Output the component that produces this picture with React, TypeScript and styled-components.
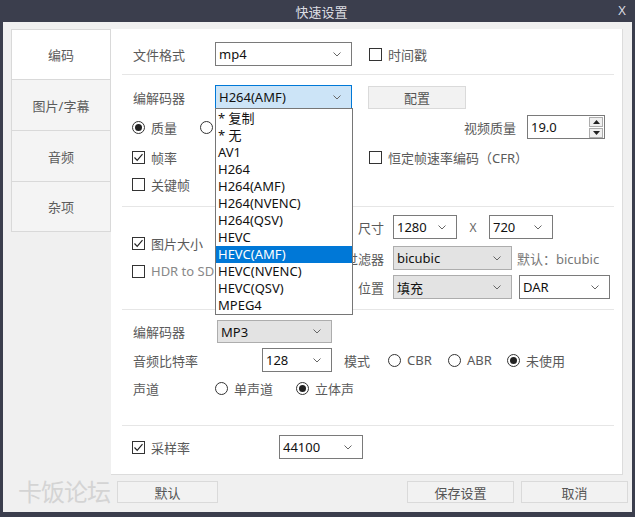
import React from "react"
import styled, { createGlobalStyle } from "styled-components"

const GlobalStyle = createGlobalStyle`
  html, body { margin: 0; padding: 0; background: #3b3e4d; }
  body { font-family: "Noto Sans", "Noto Sans CJK SC", sans-serif; font-size: 13px; }
  * { box-sizing: border-box; }
`

const codecs = [
  "* 复制", "* 无", "AV1", "H264", "H264(AMF)", "H264(NVENC)", "H264(QSV)",
  "HEVC", "HEVC(AMF)", "HEVC(NVENC)", "HEVC(QSV)", "MPEG4",
]

const Chevron = () => (
  <svg width="8" height="5" viewBox="0 0 8 5">
    <polyline points="0.5,0.5 4,4 7.5,0.5" fill="none" stroke="#666" strokeWidth="1" />
  </svg>
)

const CheckMark = () => (
  <svg width="11" height="11" viewBox="0 0 11 11">
    <polyline points="1.5,5.5 4.2,8.3 9.5,2.2" fill="none" stroke="#222" strokeWidth="1.2" />
  </svg>
)

const Combo = ({ value, w, gray, active, children }: { value: string; w: number; gray?: boolean; active?: boolean; children?: React.ReactNode }) => (
  <Select $w={w} $gray={gray} $active={active}>
    <SelValue>{value}</SelValue>
    <Chevron />
    {children}
  </Select>
)

const Check = ({ on, label, dim }: { on?: boolean; label: string; dim?: boolean }) => (
  <Opt>
    <Box>{on && <CheckMark />}</Box>
    <OptText $dim={dim}>{label}</OptText>
  </Opt>
)

const Radio = ({ on, label }: { on?: boolean; label?: string }) => (
  <Opt>
    <Circle>{on && <Dot />}</Circle>
    {label && <OptText>{label}</OptText>}
  </Opt>
)

const App = () => {
  return (
    <Window>
      <GlobalStyle />
      <TitleBar>
        <span />
        <Title>快速设置</Title>
        <Close>X</Close>
      </TitleBar>
      <Client>
        <Body>
          <Tabs>
            <Tab $on>编码</Tab>
            <Tab>图片/字幕</Tab>
            <Tab>音频</Tab>
            <Tab>杂项</Tab>
          </Tabs>
          <Panel>
            <Section $pt={13} $pb={8}>
              <Row>
                <Label $w={83}>文件格式</Label>
                <Combo value="mp4" w={137} />
                <Gap $w={17} />
                <Check label="时间戳" />
              </Row>
            </Section>
            <Divider />
            <Section $pt={10} $pb={10}>
              <Row>
                <Label $w={83}>编解码器</Label>
                <Combo value="H264(AMF)" w={137} active>
                  <List>
                    {codecs.map((c) => (
                      <Item key={c} $on={c === "HEVC(AMF)"}>{c}</Item>
                    ))}
                  </List>
                </Combo>
                <Gap $w={16} />
                <Button $w={98} $h={23}>配置</Button>
              </Row>
              <Row $mt={6}>
                <Cell $w={68}><Radio on label="质量" /></Cell>
                <Radio />
                <Spacer />
                <Label>视频质量</Label>
                <Gap $w={11} />
                <Spin>
                  <SelValue>19.0</SelValue>
                  <SpinBtns>
                    <SpinBtn>
                      <svg width="7" height="4" viewBox="0 0 7 4"><polygon points="0,4 3.5,0 7,4" fill="#222" /></svg>
                    </SpinBtn>
                    <SpinBtn>
                      <svg width="7" height="4" viewBox="0 0 7 4"><polygon points="0,0 3.5,4 7,0" fill="#222" /></svg>
                    </SpinBtn>
                  </SpinBtns>
                </Spin>
                <Gap $w={17} />
              </Row>
              <Row $mt={6}>
                <Cell $w={237}><Check on label="帧率" /></Cell>
                <Check label="恒定帧速率编码（CFR）" />
              </Row>
              <Row $mt={3}>
                <Check label="关键帧" />
              </Row>
            </Section>
            <Divider />
            <Section $pt={0} $pb={10}>
              <Split>
                <LeftCol>
                  <Row $mt={24}><Check on label="图片大小" /></Row>
                  <Row $mt={4}><Check label="HDR to SDR" dim /></Row>
                </LeftCol>
                <RightCol>
                  <Row $mt={8}>
                    <RLabel>尺寸</RLabel>
                    <Combo value="1280" w={64} />
                    <Times>X</Times>
                    <Combo value="720" w={64} />
                  </Row>
                  <Row $mt={7}>
                    <RLabel>过滤器</RLabel>
                    <Combo value="bicubic" w={119} gray />
                    <Gap $w={5} />
                    <Hint>默认：bicubic</Hint>
                  </Row>
                  <Row $mt={5}>
                    <RLabel>位置</RLabel>
                    <Combo value="填充" w={119} gray />
                    <Gap $w={7} />
                    <Combo value="DAR" w={91} />
                  </Row>
                </RightCol>
              </Split>
            </Section>
            <Divider />
            <Section $pt={10} $pb={25}>
              <Row $h={23}>
                <Label $w={85}>编解码器</Label>
                <Combo value="MP3" w={115} gray />
              </Row>
              <Row $mt={5}>
                <Label $w={130}>音频比特率</Label>
                <Combo value="128" w={70} />
                <Gap $w={11} />
                <Label $w={45}>模式</Label>
                <Cell $w={60}><Radio label="CBR" /></Cell>
                <Cell $w={59}><Radio label="ABR" /></Cell>
                <Radio on label="未使用" />
              </Row>
              <Row $mt={4}>
                <Label $w={83}>声道</Label>
                <Cell $w={81}><Radio label="单声道" /></Cell>
                <Radio on label="立体声" />
              </Row>
            </Section>
            <Divider />
            <Section $pt={9} $pb={0}>
              <Row>
                <Cell $w={147}><Check on label="采样率" /></Cell>
                <Combo value="44100" w={84} />
              </Row>
            </Section>
          </Panel>
        </Body>
        <Footer>
          <Watermark>卡饭论坛</Watermark>
          <Button $w={101} $h={22}>默认</Button>
          <Spacer />
          <Button $w={107} $h={22}>保存设置</Button>
          <Gap $w={7} />
          <Button $w={107} $h={22}>取消</Button>
          <Gap $w={4} />
        </Footer>
      </Client>
    </Window>
  )
}

export default App

const Window = styled.div`
  width: 635px;
  height: 517px;
  background: #3b3e4d;
  display: flex;
  flex-direction: column;
  overflow: hidden;
`
const TitleBar = styled.div`
  height: 22px;
  display: grid;
  grid-template-columns: 1fr auto 1fr;
  align-items: center;
  color: #dcdde2;
`
const Title = styled.span`
  font-size: 13px;
  padding-left: 8px;
`
const Close = styled.span`
  justify-self: end;
  margin-right: 9px;
  font-family: "Liberation Sans", sans-serif;
  font-size: 12px;
`
const Client = styled.div`
  flex: 1;
  margin: 0 3px 5px 3px;
  background: #f0f0f0;
  display: flex;
  flex-direction: column;
  padding-top: 7px;
`
const Body = styled.div`
  display: flex;
  height: 446px;
  margin-left: 8px;
`
const Tabs = styled.div`
  width: 100px;
  height: 203px;
  display: flex;
  flex-direction: column;
  border: 1px solid #d9d9d9;
  border-right: none;
  border-bottom: none;
`
const Tab = styled.div<{ $on?: boolean }>`
  height: 51px;
  display: flex;
  align-items: center;
  justify-content: center;
  background: ${(p) => (p.$on ? "#fff" : "#f4f4f4")};
  border-bottom: 1px solid #d9d9d9;
  border-right: 1px solid #d9d9d9;
  color: #5c5c5c;
  font-size: 13px;
  &:first-child { height: 50px; }
  &:last-child { height: 50px; }
`
const Panel = styled.div`
  width: 512px;
  background: #fff;
  border-right: 1px solid #dcdcdc;
  border-bottom: 1px solid #dcdcdc;
  display: flex;
  flex-direction: column;
`
const Section = styled.div<{ $pt: number; $pb: number }>`
  display: flex;
  flex-direction: column;
  padding: ${(p) => p.$pt}px 0 ${(p) => p.$pb}px 21px;
`
const Divider = styled.div`
  height: 1px;
  background: #e6e6e6;
  margin: 0 8px 0 11px;
`
const Row = styled.div<{ $h?: number; $mt?: number }>`
  display: flex;
  align-items: center;
  height: ${(p) => p.$h ?? 24}px;
  margin-top: ${(p) => p.$mt ?? 0}px;
`
const Split = styled.div`
  display: flex;
`
const LeftCol = styled.div`
  width: 208px;
  display: flex;
  flex-direction: column;
`
const RightCol = styled.div`
  display: flex;
  flex-direction: column;
`
const Label = styled.span<{ $w?: number }>`
  width: ${(p) => (p.$w ? `${p.$w}px` : "auto")};
  flex-shrink: 0;
  padding-left: 1px;
  color: #5a5a5a;
  white-space: nowrap;
`
const RLabel = styled.span`
  width: 44px;
  margin-right: 9px;
  text-align: right;
  color: #5a5a5a;
  white-space: nowrap;
`
const Hint = styled.span`
  color: #777;
  white-space: nowrap;
`
const Times = styled.span`
  width: 32px;
  text-align: center;
  color: #666;
  font-size: 12px;
`
const Cell = styled.div<{ $w: number }>`
  width: ${(p) => p.$w}px;
  flex-shrink: 0;
  display: flex;
  align-items: center;
`
const Gap = styled.span<{ $w: number }>`
  width: ${(p) => p.$w}px;
  flex-shrink: 0;
`
const Spacer = styled.span`
  flex: 1;
`
const Select = styled.div<{ $w: number; $gray?: boolean; $active?: boolean }>`
  position: relative;
  width: ${(p) => p.$w}px;
  height: 100%;
  flex-shrink: 0;
  display: flex;
  align-items: center;
  justify-content: space-between;
  padding: 0 10px 0 3px;
  border: 1px solid ${(p) => (p.$active ? "#0078d7" : p.$gray ? "#adadad" : "#7a7a7a")};
  background: ${(p) => (p.$active ? "#cce4f7" : p.$gray ? "#e3e3e3" : "#fff")};
  color: #111;
`
const SelValue = styled.span`
  white-space: nowrap;
`
const List = styled.div`
  position: absolute;
  top: 100%;
  left: -1px;
  width: 138px;
  padding-top: 1px;
  background: #fff;
  border: 1px solid #767676;
  z-index: 5;
`
const Item = styled.div<{ $on?: boolean }>`
  height: 17px;
  line-height: 17px;
  padding-left: 2px;
  white-space: nowrap;
  background: ${(p) => (p.$on ? "#0078d7" : "transparent")};
  color: ${(p) => (p.$on ? "#fff" : "#111")};
`
const Button = styled.div<{ $w: number; $h: number }>`
  width: ${(p) => p.$w}px;
  height: ${(p) => p.$h}px;
  flex-shrink: 0;
  display: flex;
  align-items: center;
  justify-content: center;
  background: #f2f2f2;
  border: 1px solid #dadada;
  color: #555;
`
const Spin = styled.div`
  width: 78px;
  height: 24px;
  flex-shrink: 0;
  display: flex;
  align-items: center;
  justify-content: space-between;
  padding: 0 1px 0 3px;
  border: 1px solid #7a7a7a;
  color: #111;
`
const SpinBtns = styled.div`
  display: flex;
  flex-direction: column;
  gap: 1px;
`
const SpinBtn = styled.div`
  width: 14px;
  height: 10px;
  display: flex;
  align-items: center;
  justify-content: center;
  background: #f0f0f0;
  border: 1px solid #adadad;
`
const Opt = styled.div`
  display: flex;
  align-items: center;
  white-space: nowrap;
`
const Box = styled.span`
  width: 13px;
  height: 13px;
  border: 1px solid #333;
  background: #fff;
  display: flex;
  align-items: center;
  justify-content: center;
  margin-right: 6px;
`
const Circle = styled.span`
  width: 13px;
  height: 13px;
  border: 1px solid #333;
  border-radius: 50%;
  display: flex;
  align-items: center;
  justify-content: center;
  margin-right: 6px;
`
const Dot = styled.span`
  width: 7px;
  height: 7px;
  border-radius: 50%;
  background: #222;
`
const OptText = styled.span<{ $dim?: boolean }>`
  color: ${(p) => (p.$dim ? "#888" : "#5a5a5a")};
`
const Footer = styled.div`
  flex: 1;
  display: flex;
  align-items: flex-start;
  padding: 6px 0 0 15px;
`
const Watermark = styled.span`
  width: 99px;
  font-size: 24px;
  line-height: 22px;
  color: #d4d4d4;
  white-space: nowrap;
  letter-spacing: -1px;
`
